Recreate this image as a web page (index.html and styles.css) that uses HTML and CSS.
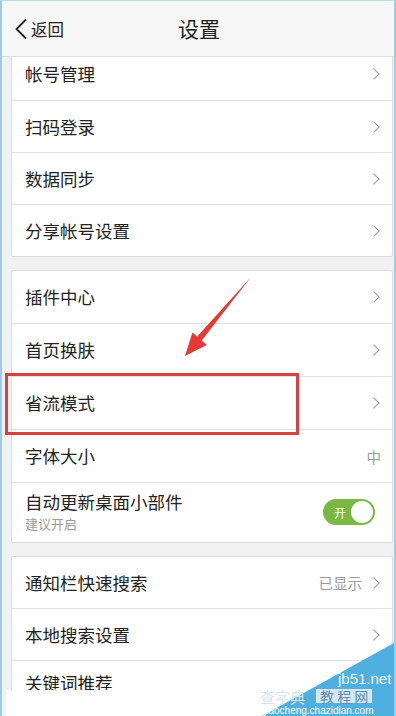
FILE: index.html
```html
<!DOCTYPE html>
<html lang="zh">
<head>
<meta charset="utf-8">
<link rel="stylesheet" href="styles.css">
</head>
<body>
<div class="screen">
  <header class="topbar">
    <div class="back">
      <svg class="back-icon" width="14" height="22" viewBox="0 0 14 22"><path d="M12 1.5 L2.5 11 L12 20.5" fill="none" stroke="#222" stroke-width="1.8"/></svg>
      <span>返回</span>
    </div>
    <div class="title">设置</div>
  </header>
  <main class="scroller">
    <div class="content">
      <section class="card card-a">
        <div class="row"><span class="label">帐号管理</span><span class="chev"></span></div>
        <div class="row"><span class="label">扫码登录</span><span class="chev"></span></div>
        <div class="row"><span class="label">数据同步</span><span class="chev"></span></div>
        <div class="row"><span class="label">分享帐号设置</span><span class="chev"></span></div>
      </section>
      <section class="card card-b">
        <div class="row"><span class="label">插件中心</span><span class="chev"></span></div>
        <div class="row"><span class="label">首页换肤</span><span class="chev"></span></div>
        <div class="row"><span class="label">省流模式</span><span class="chev"></span></div>
        <div class="row"><span class="label">字体大小</span><span class="value">中</span></div>
        <div class="row row-tall">
          <div class="texts">
            <span class="label">自动更新桌面小部件</span>
            <span class="sub">建议开启</span>
          </div>
          <div class="toggle"><span class="toggle-text">开</span><span class="knob"></span></div>
        </div>
      </section>
      <section class="card card-c">
        <div class="row"><span class="label">通知栏快速搜索</span><span class="right"><span class="value">已显示</span><span class="chev"></span></span></div>
        <div class="row"><span class="label">本地搜索设置</span><span class="chev"></span></div>
        <div class="row row-last"><span class="label">关键词推荐</span></div>
      </section>
    </div>
  </main>

  <div class="highlight"></div>
  <svg class="arrow" width="396" height="716" viewBox="0 0 396 716">
    <polygon points="251,277 201.8,340.4 206.8,345 185,356 192.4,332.4 197.2,336.6" fill="#e53a35"/>
  </svg>

  <div class="mark-strip"></div>
  <svg class="mark-tri" width="396" height="716" viewBox="0 0 396 716">
    <polygon points="396,642 396,716 262,716" fill="#4fb0e0"/>
  </svg>
  <div class="mark-site">jb51.net</div>
  <div class="mark-cn1">查字典</div>
  <div class="mark-cn2">教 程 网</div>
  <div class="mark-url">jiaocheng.chazidian.com</div>
</div>
</body>
</html>
```

FILE: styles.css
```css
* { box-sizing: border-box; }
html, body {
  margin: 0;
  padding: 0;
  background: #f1f1f1;
}
body {
  font-family: "Noto Sans CJK SC", "Noto Sans", sans-serif;
  color: #222;
}
.screen {
  position: relative;
  width: 396px;
  height: 716px;
  overflow: hidden;
  background: #f1f1f1;
  border-left: 2px solid #9ccbeb;
  border-right: 2px solid #9ccbeb;
  border-top: 1px solid #b9dbf1;
  display: flex;
  flex-direction: column;
}
.topbar {
  position: relative;
  height: 56px;
  flex: none;
  background: #f7f7f7;
  border-bottom: 1px solid #dedede;
  display: flex;
  align-items: center;
  justify-content: center;
  z-index: 2;
}
.back {
  position: absolute;
  left: 12px;
  top: 0;
  height: 55px;
  display: flex;
  align-items: center;
  gap: 3px;
  font-size: 16.5px;
  color: #222;
}
.back-icon { margin-top: 1px; }
.title {
  font-size: 21px;
  color: #1e1e1e;
  margin-left: 2px;
  margin-top: -2px;
}
.scroller {
  flex: 1;
  overflow: hidden;
}
.content {
  margin-top: -10px;
  display: flex;
  flex-direction: column;
  gap: 13px;
  padding: 0 1px 0 9px;
}
.card {
  background: #fff;
  border: 1px solid #dcdcdc;
  border-radius: 2px;
}
.row {
  height: 52px;
  display: flex;
  align-items: center;
  justify-content: space-between;
  padding: 0 11px 0 13px;
  border-top: 1px solid #e2e2e2;
}
.card-b .row { height: 53px; }
.row:first-child { border-top: none; height: 52px; }
.card-c .row { height: 52px; }
.card-c .row:first-child { height: 51px; }
.card-c .row-last {
  align-items: flex-start;
  padding-top: 13px;
}
.label {
  font-size: 17.5px;
  line-height: 1;
  color: #222;
}
.chev {
  width: 8px;
  height: 8px;
  border-top: 1.8px solid #9b9b9b;
  border-right: 1.8px solid #9b9b9b;
  transform: rotate(45deg);
  margin-right: 3px;
}
.value {
  font-size: 14.5px;
  color: #9a9a9a;
}
.right {
  display: flex;
  align-items: center;
  gap: 8px;
}
.card-b .row-tall {
  height: 60px;
  align-items: flex-start;
  padding-top: 10px;
}
.texts {
  display: flex;
  flex-direction: column;
  gap: 6px;
}
.sub {
  font-size: 13px;
  line-height: 1;
  color: #9a9a9a;
}
.toggle {
  margin-top: 6px;
  margin-right: 6px;
  width: 52px;
  height: 26px;
  border-radius: 13px;
  background: #7ab843;
  display: flex;
  align-items: center;
  justify-content: space-between;
  padding: 0 2px 0 11px;
}
.toggle-text {
  font-size: 12px;
  color: #fff;
}
.knob {
  width: 22px;
  height: 22px;
  border-radius: 50%;
  background: #fff;
}
.highlight {
  position: absolute;
  left: 3px;
  top: 372px;
  width: 294px;
  height: 62px;
  border: 3px solid #d9403f;
  z-index: 3;
}
.arrow, .mark-tri {
  position: absolute;
  left: -2px;
  top: -1px;
  z-index: 3;
}
.mark-strip {
  position: absolute;
  left: 4px;
  top: 689px;
  width: 270px;
  height: 30px;
  background: #fff;
  z-index: 3;
}
.mark-site, .mark-cn1, .mark-cn2, .mark-url {
  position: absolute;
  z-index: 4;
  white-space: nowrap;
  line-height: 1;
  font-family: "Liberation Sans", "Noto Sans CJK SC", sans-serif;
}
.mark-site {
  left: 336px;
  top: 670px;
  font-size: 15px;
  color: #e9f5fb;
}
.mark-cn1 {
  left: 258px;
  top: 688px;
  font-size: 15px;
  color: #d8e4ea;
  font-family: "Noto Sans CJK SC", sans-serif;
}
.mark-cn2 {
  left: 314px;
  top: 688px;
  padding: 0 4px;
  font-size: 14px;
  background: #d8e6ee;
  color: #5b8fb0;
  font-family: "Noto Sans CJK SC", sans-serif;
}
.mark-url {
  left: 262px;
  top: 705px;
  font-size: 10px;
  color: #ffffff;
}
```
